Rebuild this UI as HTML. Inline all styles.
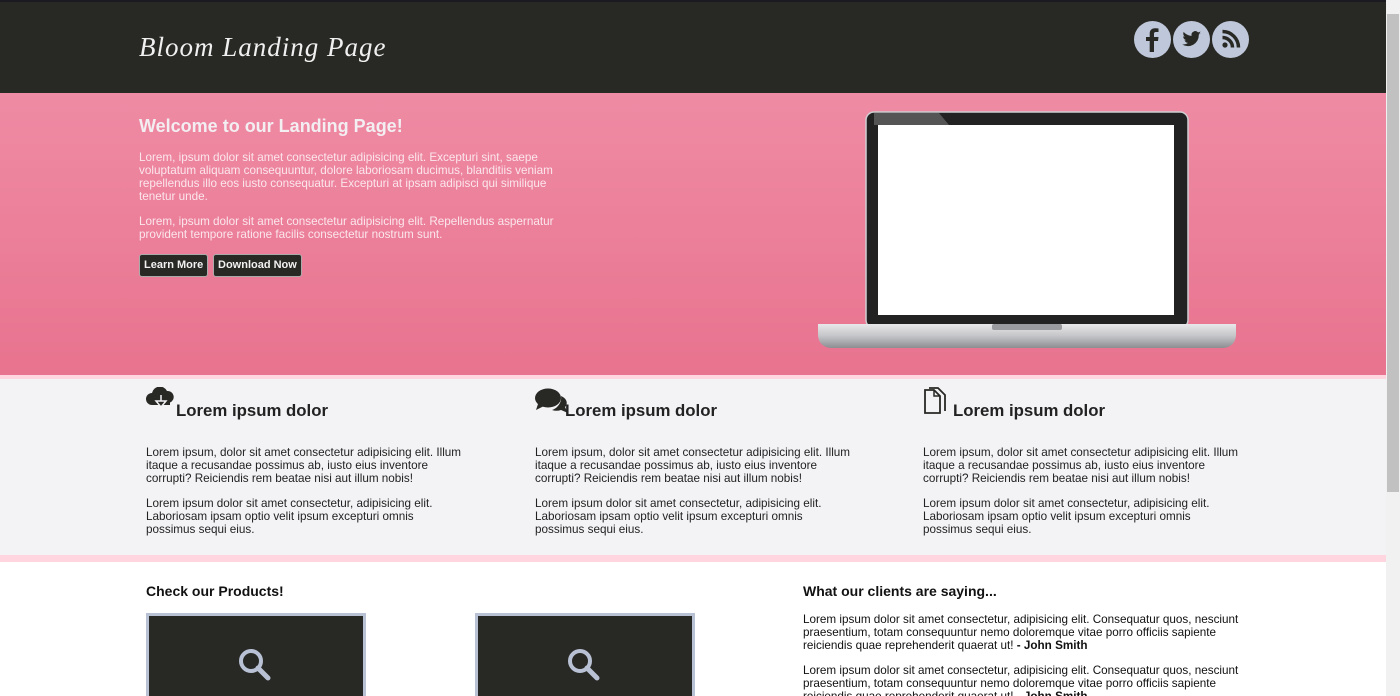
<!DOCTYPE html>
<html><head><meta charset="utf-8"><style>
*{margin:0;padding:0;box-sizing:border-box}
html,body{width:1400px;height:696px;overflow:hidden;font-family:"Liberation Sans",Arial,sans-serif;background:#fff}
.page{position:absolute;left:0;top:0;width:1386px;height:696px;overflow:hidden}
.sb{position:absolute;left:1386px;top:0;width:14px;height:696px;background:#f1f1f1}
.sb .th{position:absolute;left:1px;top:14px;width:12px;height:478px;background:#c1c1c1}
header{position:absolute;top:0;left:0;width:1386px;height:93px;background:#282824;border-top:2px solid #1a1a20}
.logo{position:absolute;left:139px;top:30px;color:#f0f0f0;font-family:"Liberation Serif",serif;font-style:italic;font-size:27px;letter-spacing:1px}
.soc{position:absolute;top:19px;width:37px;height:37px;border-radius:50%;background:#bfc8da}
.hero{position:absolute;top:93px;left:0;width:1386px;height:282px;background:linear-gradient(#ef8ba4,#e8738f)}
.hero h1{position:absolute;left:139px;top:23px;font-size:18px;color:#f2eef2;font-weight:bold}
.hero p{position:absolute;left:139px;width:420px;font-size:11.7px;line-height:13px;color:#fbe6ec}
.btn{position:absolute;top:161px;height:23px;background:#282824;color:#f2f2f2;font-size:11px;font-weight:bold;border:1px solid #aaa;border-radius:3px;padding:4px 4px;line-height:13px}
.band1{position:absolute;top:375px;left:0;width:1386px;height:4px;background:#ffd6e0}
.feat{position:absolute;top:379px;left:0;width:1386px;height:176px;background:#f3f3f6}
.band2{position:absolute;top:555px;left:0;width:1386px;height:7px;background:#ffd6e0}
.col{position:absolute;top:0;width:330px}
.col h2{position:absolute;left:30px;top:22px;font-size:16.8px;color:#222;white-space:nowrap}
.col p{position:absolute;left:0;width:318px;font-size:11.7px;line-height:13px;color:#222}
.col svg{position:absolute;left:0;top:8px}
h3{position:absolute;font-size:14px;color:#111}
.prod{position:absolute;top:613px;width:220px;height:90px;background:#282824;border:3px solid #b9c1d5}
.cl{position:absolute;left:803px;width:440px;font-size:11.7px;line-height:13px;color:#111}
</style></head><body><div class="page">
<header>
<div class="logo">Bloom Landing Page</div>
<div class="soc" style="left:1134px"><svg width="37" height="37" viewBox="0 0 37 37"><path d="M20 31V20h4l.5-4H20v-3c0-1.2.4-2 2-2h2.5V7.5c-.5 0-2-.2-3.5-.2-3.4 0-5.3 2-5.3 5.5V16H12v4h3.7v11z" fill="#282824"/></svg></div>
<div class="soc" style="left:1173px"><svg width="37" height="37" viewBox="0 0 37 37"><path d="M28 12c-.7.3-1.4.5-2.2.6.8-.5 1.4-1.2 1.7-2.1-.7.4-1.6.8-2.4.9a3.8 3.8 0 0 0-6.5 3.5c-3.2-.2-6-1.7-7.9-4-.9 1.7-.3 3.8 1.2 4.9-.6 0-1.2-.2-1.7-.5 0 1.900 1.300 3.500 3 3.800-.6.2-1.200.2-1.700.1.500 1.500 1.900 2.600 3.600 2.700A7.700 7.700 0 0 1 9 23.400 10.900 10.900 0 0 0 25.800 14v-.5c.9-.5 1.600-1.200 2.200-1.500z" fill="#282824"/></svg></div>
<div class="soc" style="left:1212px"><svg width="37" height="37" viewBox="0 0 37 37"><circle cx="13" cy="24" r="2.600" fill="#282824"/><path d="M10.500 16.500a10 10 0 0 1 10 10M10.500 10.500a16 16 0 0 1 16 16" stroke="#282824" stroke-width="3.500" fill="none"/></svg></div>
</header>
<div class="hero">
<h1>Welcome to our Landing Page!</h1>
<p style="top:58px">Lorem, ipsum dolor sit amet consectetur adipisicing elit. Excepturi sint, saepe voluptatum aliquam consequuntur, dolore laboriosam ducimus, blanditiis veniam repellendus illo eos iusto consequatur. Excepturi at ipsam adipisci qui similique tenetur unde.</p>
<p style="top:122px">Lorem, ipsum dolor sit amet consectetur adipisicing elit. Repellendus aspernatur provident tempore ratione facilis consectetur nostrum sunt.</p>
<div class="btn" style="left:139px">Learn More</div>
<div class="btn" style="left:213px">Download Now</div>
<svg style="position:absolute;left:816px;top:17px" width="422" height="242" viewBox="0 0 422 242">
<defs><linearGradient id="b" x1="0" y1="0" x2="0" y2="1"><stop offset="0" stop-color="#e8e8ea"/><stop offset=".5" stop-color="#c4c5c8"/><stop offset="1" stop-color="#8d8e92"/></linearGradient></defs>
<rect x="50" y="2" width="322" height="216" rx="8" fill="#222" stroke="#cfcfd2" stroke-width="1.500"/>
<path d="M58 3h65l10 12H58z" fill="#555"/>
<rect x="62" y="15" width="296" height="190" fill="#fff"/>
<path d="M2 214h418v10q0 12-12 14H14Q2 236 2 224z" fill="url(#b)"/>
<rect x="176" y="214" width="70" height="6" rx="2" fill="#9a9b9f"/>
</svg>
</div>
<div class="band1"></div>
<div class="feat">
<div class="col" style="left:146px"><svg width="30" height="26" viewBox="0 0 30 26"><path d="M6 18a6 6 0 0 1 0-12 8 8 0 0 1 15-2 6 6 0 0 1 3 11.500L24 18z" fill="#282824"/><path d="M10 14h5V8h0v6h5l-5 6z" fill="#282824" stroke="#f3f3f6" stroke-width="1.500"/></svg><h2>Lorem ipsum dolor</h2>
<p style="top:67px">Lorem ipsum, dolor sit amet consectetur adipisicing elit. Illum itaque a recusandae possimus ab, iusto eius inventore corrupti? Reiciendis rem beatae nisi aut illum nobis!</p>
<p style="top:118px">Lorem ipsum dolor sit amet consectetur, adipisicing elit. Laboriosam ipsam optio velit ipsum excepturi omnis possimus sequi eius.</p></div>
<div class="col" style="left:535px"><svg width="34" height="30" viewBox="0 0 34 30"><ellipse cx="13" cy="11" rx="13" ry="9.500" fill="#282824"/><path d="M3 17l-2 6 8-4z" fill="#282824"/><path d="M26 9c5 2 7 6 5 10l-1 1 3 6-7-3c-3 1-6 1-9 0 6-2 10-8 9-14z" fill="#282824"/></svg><h2>Lorem ipsum dolor</h2>
<p style="top:67px">Lorem ipsum, dolor sit amet consectetur adipisicing elit. Illum itaque a recusandae possimus ab, iusto eius inventore corrupti? Reiciendis rem beatae nisi aut illum nobis!</p>
<p style="top:118px">Lorem ipsum dolor sit amet consectetur, adipisicing elit. Laboriosam ipsam optio velit ipsum excepturi omnis possimus sequi eius.</p></div>
<div class="col" style="left:923px"><svg width="28" height="30" viewBox="0 0 28 30"><path d="M2 3h9l6 6v17H2z" fill="none" stroke="#282824" stroke-width="1.800"/><path d="M6 1h9l7 7v16" fill="none" stroke="#282824" stroke-width="1.800"/><path d="M11 3v6h6" fill="none" stroke="#282824" stroke-width="1.500"/></svg><h2>Lorem ipsum dolor</h2>
<p style="top:67px">Lorem ipsum, dolor sit amet consectetur adipisicing elit. Illum itaque a recusandae possimus ab, iusto eius inventore corrupti? Reiciendis rem beatae nisi aut illum nobis!</p>
<p style="top:118px">Lorem ipsum dolor sit amet consectetur, adipisicing elit. Laboriosam ipsam optio velit ipsum excepturi omnis possimus sequi eius.</p></div>
</div>
<div class="band2"></div>
<h3 style="left:146px;top:583px">Check our Products!</h3>
<div class="prod" style="left:146px"><svg style="position:absolute;left:87px;top:30px" width="40" height="40" viewBox="0 0 40 40"><circle cx="15" cy="15" r="10" fill="none" stroke="#b9c1d5" stroke-width="4"/><path d="M22 22l10 10" stroke="#b9c1d5" stroke-width="5" stroke-linecap="round"/></svg></div>
<div class="prod" style="left:475px"><svg style="position:absolute;left:87px;top:30px" width="40" height="40" viewBox="0 0 40 40"><circle cx="15" cy="15" r="10" fill="none" stroke="#b9c1d5" stroke-width="4"/><path d="M22 22l10 10" stroke="#b9c1d5" stroke-width="5" stroke-linecap="round"/></svg></div>
<h3 style="left:803px;top:583px">What our clients are saying...</h3>
<p class="cl" style="top:613px">Lorem ipsum dolor sit amet consectetur, adipisicing elit. Consequatur quos, nesciunt praesentium, totam consequuntur nemo doloremque vitae porro officiis sapiente reiciendis quae reprehenderit quaerat ut! <b>- John Smith</b></p>
<p class="cl" style="top:664px">Lorem ipsum dolor sit amet consectetur, adipisicing elit. Consequatur quos, nesciunt praesentium, totam consequuntur nemo doloremque vitae porro officiis sapiente reiciendis quae reprehenderit quaerat ut! <b>- John Smith</b></p>
</div>
<div class="sb"><div class="th"></div></div>
</body></html>
